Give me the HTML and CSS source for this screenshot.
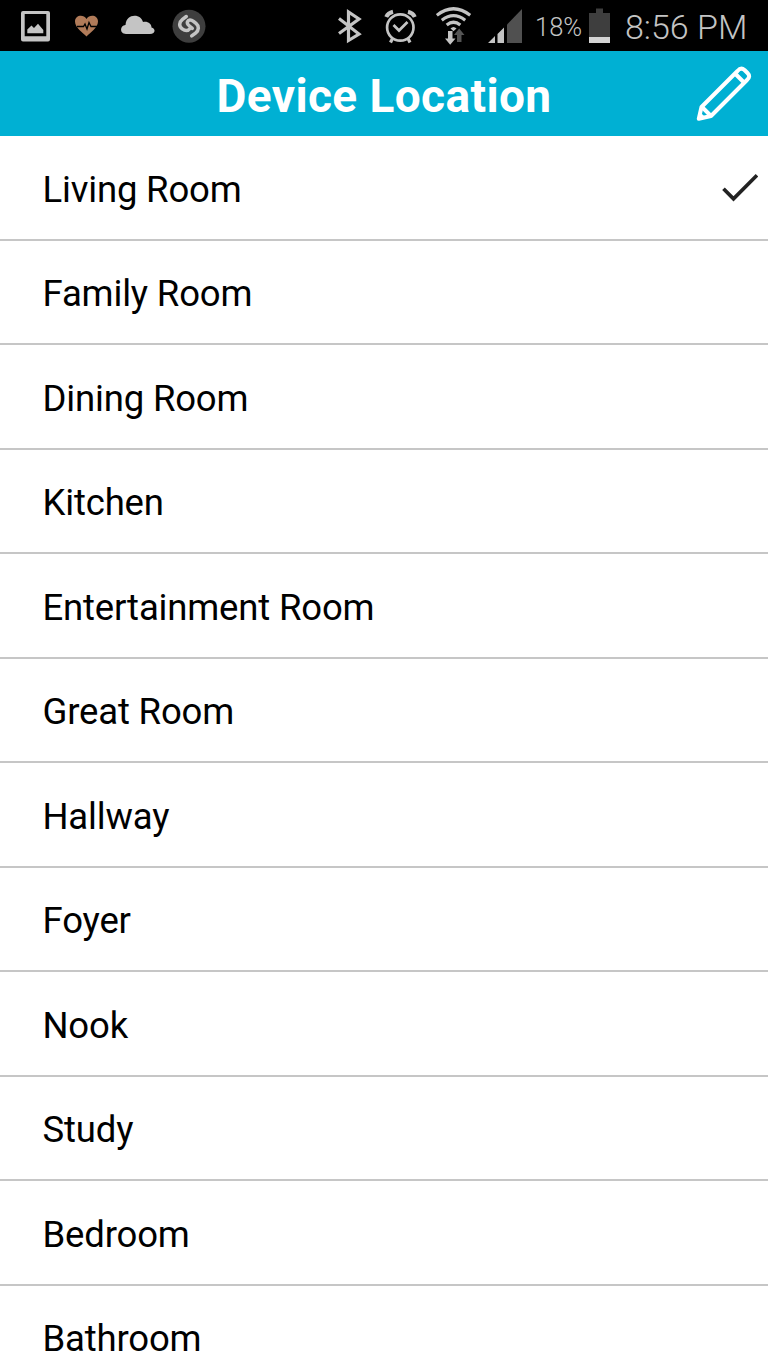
FILE: index.html
```html
<!DOCTYPE html>
<html lang="en">
<head>
<meta charset="utf-8">
<title>Device Location</title>
<link rel="stylesheet" href="styles.css">
</head>
<body>
<div class="status">
  <div class="group notices">
    <svg width="30" height="51" viewBox="21 0 30 51"><path fill="#c4c4c4" fill-rule="evenodd" d="M23 11H48Q50 11 50 13V39.500Q50 41.500 48 41.500H23Q21 41.500 21 39.500V13Q21 11 23 11ZM24.700 14V36.300H46.300V14Z"/><path fill="#c4c4c4" d="M27.300 33.300V29.500L31.500 25.500L34 28L38 23.800L43.300 30V33.300Z"/></svg>
    <svg width="24" height="51" viewBox="75 0 24 51"><path fill="#b17b59" d="M86.500 36.500C83 32.500 75 28 75 21.500C75 15 83.500 14 86.500 19C89.500 14 98 15 98 21.500C98 28 90 32.500 86.500 36.500Z"/><path class="line" stroke="#000" stroke-width="1.300" d="M77 26.500H83.500L85 24L87 29L89 22.500L91 26.500H97"/></svg>
    <svg width="35" height="51" viewBox="121 0 35 51"><path fill="#c4c4c4" d="M126 34C119.500 34 119.500 25.500 125.500 25C126 18.500 130 15.800 134.500 15.800C139 15.800 142 18.500 143 22C148 21 151.500 24 151.500 27.500C156 28.500 155.500 34 150 34Z"/></svg>
    <svg width="34" height="51" viewBox="172 0 34 51"><circle cx="189" cy="26.200" r="16.500" fill="#3e3e3e"/><g class="line" stroke="#c4c4c4" stroke-width="3.500" stroke-linecap="round"><path d="M186.300 16.500L182.500 19.300C178.800 22.300 178.800 26.300 182.200 28.800C185 31 188 31.300 190 28.500"/><path d="M191.700 35.900L195.500 33.100C199.200 30.100 199.200 26.100 196 23.400L193.500 21.400C190.800 19.300 188.500 19.600 187.500 21.700C186.700 23.600 188 24.800 189.500 26L192.300 28.300"/></g></svg>
  </div>
  <div class="group system">
    <svg class="bluetooth" width="24" height="51" viewBox="338 0 24 51"><path class="line" stroke="#c4c4c4" stroke-width="3.200" d="M339 18.500L359 34L348.500 40.500V12L359 19L339 33.500"/></svg>
    <svg class="alarm" width="33" height="51" viewBox="384 0 33 51"><g class="line" stroke="#c4c4c4"><circle cx="400.300" cy="27.500" r="13.200" stroke-width="2.700"/><path stroke-width="2.700" d="M393.500 25L399 30.500L407.500 22"/><path stroke-width="3.200" d="M392.500 38.500L390.500 42.500M408 38.500L410 42.500"/><path stroke-width="4" d="M386.200 17Q388 13 393 11.800M414.800 17Q413 13 408 11.800"/></g></svg>
    <svg class="wifi" width="36" height="51" viewBox="436 0 36 51"><g class="line" stroke="#c4c4c4" stroke-width="3.200"><path d="M436.800 15.300Q453.500 2.200 470.200 15.300M441.800 20.200Q453.500 11.200 465.200 20.200M446.700 25Q453.500 19.500 460.300 25"/></g><path fill="#c4c4c4" d="M450.500 28.500Q453.500 25.500 456.500 28.500L453.500 31.200ZM448 31H452.500V38.500H455.500L450.200 44.700L445 38.500H448Z"/><path fill="#555" d="M459.200 28.500L464.500 35H461.500V42H457V35H454Z"/></svg>
    <svg width="34" height="51" viewBox="488 0 34 51"><path fill="#c4c4c4" d="M488 43L495 36V43ZM497.500 34L504 27.500V43H497.500Z"/><path fill="#505050" d="M507 24.500L522 9V43H507Z"/></svg>
    <span class="charge">18%</span>
    <svg width="21" height="51" viewBox="589 0 21 51"><path fill="#3e3e3e" d="M589 13H596V8.500H603V13H610V43H589Z"/><path fill="#d4d4d4" d="M589 37H610V43H589Z"/></svg>
    <span class="clock">8:56 PM</span>
  </div>
</div>
<header class="bar">
  <h1 class="title">Device Location</h1>
  <svg class="edit" width="56" height="58" viewBox="696 65 56 58"><g class="line" stroke="#fff" stroke-width="4" stroke-linejoin="round"><path d="M698.800 118.800L701.500 107L737.500 71Q741 67 744.500 70L747.500 73Q751 76.500 747 80L711 116Z"/><path d="M735 73.500L744.500 83M702 107L711 116"/></g><path fill="#fff" d="M698 120L700 112L705.500 117.500Z"/></svg>
</header>
<ul class="list">
  <li class="row">Living Room<svg class="check" width="36" height="30" viewBox="722 173 36 30"><path class="line" stroke="#222" stroke-width="3.700" d="M723.500 188.700L733.500 198.800L757 175.200"/></svg></li>
  <li class="row">Family Room</li>
  <li class="row">Dining Room</li>
  <li class="row">Kitchen</li>
  <li class="row">Entertainment Room</li>
  <li class="row">Great Room</li>
  <li class="row">Hallway</li>
  <li class="row">Foyer</li>
  <li class="row">Nook</li>
  <li class="row">Study</li>
  <li class="row">Bedroom</li>
  <li class="row">Bathroom</li>
</ul>
</body>
</html>
```
FILE: styles.css
```css
* { box-sizing: border-box; }
body {
  margin: 0;
  height: 1365px;
  overflow: hidden;
  background: #fff;
  color: #000;
  font-family: Roboto, "Liberation Sans", sans-serif;
}
svg { display: block; flex: none; }
.line { fill: none; }
.status {
  display: flex;
  justify-content: space-between;
  height: 51px;
  padding: 0 19px 0 21px;
  background: #000;
  color: #c4c4c4;
}
.group { display: flex; }
.notices { gap: 23px; }
.notices svg:nth-child(2) { margin: 0 -1px 0 1px; }
.notices svg:last-child { margin-left: -7px; }
.bluetooth { margin-right: 22px; }
.alarm { margin-right: 19px; }
.wifi { margin-right: 16px; }
.charge {
  width: 54px;
  margin-left: 13px;
  font-size: 25.5px;
  font-weight: 350;
  line-height: 54px;
  white-space: nowrap;
}
.clock {
  width: 124px;
  margin-left: 15px;
  font-size: 34px;
  font-weight: 350;
  line-height: 54px;
  white-space: nowrap;
}
.bar {
  display: grid;
  grid-template-columns: 72px 1fr 72px;
  align-items: center;
  height: 85.3px;
  background: #00b0d3;
}
.title {
  grid-column: 2;
  margin: 0;
  padding-top: 5px;
  color: #fff;
  font-size: 46px;
  font-weight: 700;
  letter-spacing: 0.4px;
  line-height: 54px;
  text-align: center;
}
.list { margin: 0; padding: 0; list-style: none; }
.row {
  display: flex;
  align-items: center;
  justify-content: space-between;
  height: 104.5px;
  padding: 4px 10px 0 42.5px;
  border-bottom: 2px solid #c6c6c6;
  font-size: 36.5px;
  letter-spacing: -0.17px;
  line-height: 44px;
}
.check { margin-top: -4px; }
```
